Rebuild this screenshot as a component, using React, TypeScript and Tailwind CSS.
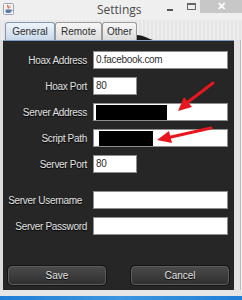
import React from "react";

function JavaIcon() {
  return (
    <svg width="11" height="12" viewBox="0 0 11 12">
      <rect x="0.5" y="0.5" width="10" height="11" rx="1" fill="#f4f4f4" stroke="#9aa4b4" />
      <path d="M5 2 C3.5 3.5 6.5 4 5 5.5" stroke="#e0502a" strokeWidth="1.2" fill="none" />
      <path d="M7 2.5 C6 3.5 7.5 4 6.8 5" stroke="#e0502a" strokeWidth="0.9" fill="none" />
      <path d="M2.5 6.5 H8 V8.5 C8 9.5 7 10 5.2 10 C3.5 10 2.5 9.5 2.5 8.5 Z" fill="#5a7aa8" />
      <path d="M8 7 H9 V8 H8" stroke="#5a7aa8" strokeWidth="0.8" fill="none" />
    </svg>
  );
}

function Field({ w, value, redact }: { w: string; value?: string; redact?: string }) {
  return (
    <div className={`${w} h-[18px] bg-white border border-[#8e8e8e] flex items-center px-[2px] relative overflow-hidden`}>
      {value && <span className="text-[10px] tracking-[-0.3px] text-[#303030] leading-none">{value}</span>}
      {redact && <div className={`${redact} h-[15px] bg-black`} />}
    </div>
  );
}

function Row({ label, children, lcls = "" }: { label: string; children: React.ReactNode; lcls?: string }) {
  return (
    <div className="flex items-center h-[18px]">
      <div className={`w-[84px] text-right text-[10px] tracking-[-0.3px] text-[#e2e2e2] [text-shadow:0_1px_1px_#000] whitespace-nowrap ${lcls}`}>
        {label}
      </div>
      <div className="ml-[6px]">{children}</div>
    </div>
  );
}

function Tab({ label, active, w }: { label: string; active?: boolean; w: string }) {
  return (
    <div
      className={`${w} h-[18px] flex items-center justify-center text-[10px] text-[#2e2e2e] rounded-t-[3px] border border-b-0 ${
        active
          ? "bg-gradient-to-b from-[#eef4fa] to-[#c9d9ea] border-[#8199b4]"
          : "bg-gradient-to-b from-[#f7f7f7] to-[#dcdcdc] border-[#9b9b9b]"
      }`}
    >
      {label}
    </div>
  );
}

function DarkButton({ label, w }: { label: string; w: string }) {
  return (
    <div className={`${w} h-[19px] rounded-[4px] border border-[#5c5c5c] bg-gradient-to-b from-[#4a4a4a] to-[#303030] shadow-[0_0_0_1px_#141414] flex items-center justify-center text-[10px] text-[#e4e4e4] [text-shadow:0_1px_1px_#000]`}>
      {label}
    </div>
  );
}

export default function App() {
  return (
    <div className="w-[242px] h-[300px] relative overflow-hidden bg-[#ebebeb] flex flex-col font-['Liberation_Sans',Arial,sans-serif]">
      {/* title bar */}
      <div className="h-[20px] flex items-start shrink-0 bg-[#efefef]">
        <div className="ml-[3px] mt-[3px]">
          <JavaIcon />
        </div>
        <div className="ml-[83px] mt-[2px] text-[12px] text-[#4a4a4a] font-['Open_Sans',sans-serif] leading-[16px]">Settings</div>
        <div className="ml-auto flex items-start">
          <div className="w-[6px] h-[2px] bg-[#555] mt-[9px] mr-[14px]" />
          <div className="w-[9px] h-[7px] border border-[#666] border-t-2 mt-[3px] mr-[4px]" />
          <div className="w-[42px] h-[13px] bg-[#c7c7c7] flex items-center justify-center text-white text-[11px] leading-none font-bold">
            ✕
          </div>
        </div>
      </div>

      {/* tab strip */}
      <div className="h-[20px] shrink-0 relative flex items-end pl-[5px] [background-image:repeating-linear-gradient(90deg,#d6d6d6_0px,#f5f5f5_1px,#e2e2e2_2px,#fbfbfb_3px,#cfcfcf_4px),repeating-linear-gradient(0deg,rgba(255,255,255,0.5)_0px,rgba(120,120,120,0.15)_1px,rgba(255,255,255,0.3)_2px)]">
        <Tab label="General" active w="w-[50px]" />
        <Tab label="Remote" w="w-[47px]" />
        <Tab label="Other" w="w-[35px]" />
        <svg width="16" height="8" viewBox="0 0 16 8" className="self-end">
          <path d="M0 8 L0 3 C5 3 10 6 16 8 Z" fill="#1c1c1c" />
        </svg>
      </div>

      {/* body */}
      <div className="h-[250px] shrink-0 flex">
        <div className="w-[3px] bg-[#dcdcdc]" />
        <div className="w-[231px] bg-[#262626] border-t border-[#7f9fc2] flex flex-col pt-[10px]">
          <div className="flex flex-col gap-[8px]">
            <Row label="Hoax Address">
              <Field w="w-[135px]" value="0.facebook.com" />
            </Row>
            <Row label="Hoax Port">
              <Field w="w-[44px]" value="80" />
            </Row>
            <Row label="Server Address">
              <Field w="w-[135px]" redact="w-[71px]" />
            </Row>
            <Row label="Script Path">
              <Field w="w-[135px]" redact="w-[54px] ml-[3px]" />
            </Row>
            <Row label="Server Port">
              <Field w="w-[44px]" value="80" />
            </Row>
          </div>
          <div className="flex flex-col gap-[8px] mt-[18px]">
            <Row label="Server Username" lcls="pr-[5px]">
              <Field w="w-[135px]" />
            </Row>
            <Row label="Server Password">
              <Field w="w-[135px]" />
            </Row>
          </div>
          <div className="flex justify-between px-[5px] mt-[31px]">
            <DarkButton label="Save" w="w-[98px]" />
            <DarkButton label="Cancel" w="w-[98px]" />
          </div>
        </div>
        <div className="w-[6px] bg-[#e3e3e3]" />
        <div className="flex-1 bg-[#f4f4f4] border-l border-[#b8b8b8]" />
      </div>

      <div className="h-[6px] shrink-0 bg-[#e6e6e6]" />
      <div className="flex-1 bg-gradient-to-r from-[#1f7fd6] via-[#3b95e0] to-[#1f7fd6]" />

      {/* annotation arrows */}
      <svg width="242" height="300" viewBox="0 0 242 300" className="absolute inset-0 pointer-events-none">
        <line x1="213" y1="83" x2="188" y2="102" stroke="#e8161e" strokeWidth="3" strokeLinecap="round" />
        <polygon points="178,111 192,107 184,97" fill="#e8161e" />
        <line x1="211" y1="128" x2="171" y2="137" stroke="#e8161e" strokeWidth="3" strokeLinecap="round" />
        <polygon points="157,140 172,143 169,131" fill="#e8161e" />
      </svg>
    </div>
  );
}
